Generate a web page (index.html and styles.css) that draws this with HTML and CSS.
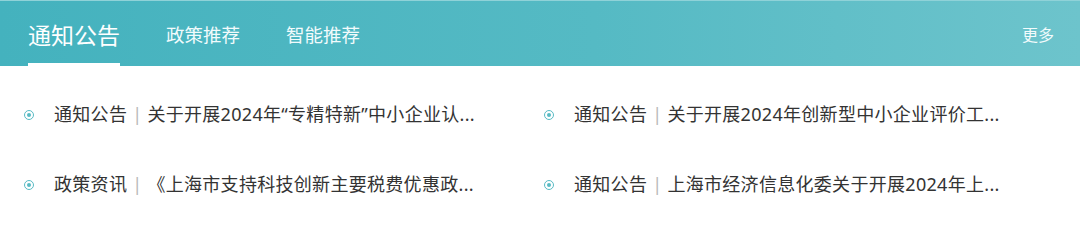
FILE: index.html
```html
<!DOCTYPE html>
<html lang="zh-CN">
<head>
<meta charset="utf-8">
<link rel="stylesheet" href="styles.css">
</head>
<body>
<div class="panel">
  <div class="tabs">
    <div class="tab active">通知公告</div>
    <div class="tab">政策推荐</div>
    <div class="tab">智能推荐</div>
    <div class="more">更多</div>
  </div>
  <div class="list">
    <div class="item"><span class="dot"></span><span class="text">通知公告<span class="sep">|</span>关于开展2024年“专精特新”中小企业认...</span></div>
    <div class="item"><span class="dot"></span><span class="text">通知公告<span class="sep">|</span>关于开展2024年创新型中小企业评价工...</span></div>
    <div class="item"><span class="dot"></span><span class="text">政策资讯<span class="sep">|</span>《上海市支持科技创新主要税费优惠政...</span></div>
    <div class="item"><span class="dot"></span><span class="text">通知公告<span class="sep">|</span>上海市经济信息化委关于开展2024年上...</span></div>
  </div>
</div>
</body>
</html>
```

FILE: styles.css
```css
html, body {
  margin: 0;
  padding: 0;
  background: #ffffff;
}
body {
  font-family: "Noto Sans CJK SC", "Noto Sans", sans-serif;
  width: 1080px;
  height: 243px;
  overflow: hidden;
}
.panel {
  width: 1080px;
  height: 243px;
  background: #fff;
}
.tabs {
  height: 66px;
  box-sizing: border-box;
  border-top: 1px solid #8fd2d8;
  background: linear-gradient(90deg, #44b2be 0%, #55bac4 55%, #6dc4cc 100%);
  display: flex;
  align-items: stretch;
  padding: 0 26px 0 28px;
  color: #fff;
}
.tab {
  display: flex;
  align-items: center;
  font-size: 18.5px;
  margin-right: 46px;
  position: relative;
  color: #f2fbfc;
}
.tab.active {
  font-size: 23px;
  color: #fff;
}
.tab.active::after {
  content: "";
  position: absolute;
  left: 0;
  right: 0;
  bottom: 0;
  height: 3px;
  background: #fff;
}
.more {
  margin-left: auto;
  display: flex;
  align-items: center;
  font-size: 16px;
  color: #f2fbfc;
}
.list {
  display: grid;
  grid-template-columns: 520px 520px;
  grid-auto-rows: 70px;
  padding: 12px 0 0 24px;
}
.item {
  display: flex;
  align-items: center;
  font-size: 18px;
  color: #333;
}
.dot {
  width: 8px;
  height: 8px;
  border: 1.5px solid #58bbc4;
  border-radius: 50%;
  margin-right: 20px;
  margin-top: 4px;
  position: relative;
  flex: none;
}
.dot::after {
  content: "";
  position: absolute;
  left: 2px;
  top: 2px;
  width: 4px;
  height: 4px;
  border-radius: 50%;
  background: #58bbc4;
}
.text {
  white-space: nowrap;
  letter-spacing: 0.3px;
  font-family: "Noto Sans", "Noto Sans CJK SC", sans-serif;
}
.sep {
  color: #b8b8b8;
  margin: 0 5px;
  font-size: 18px;
}
```
